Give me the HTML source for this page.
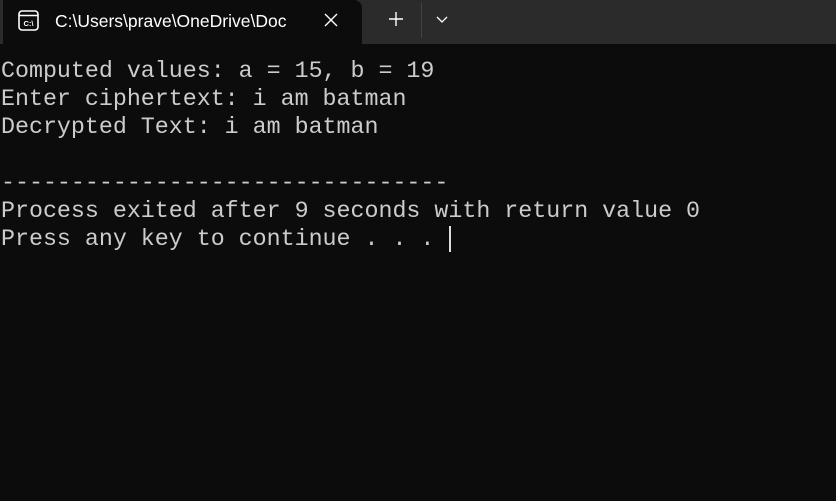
<!DOCTYPE html>
<html><head><style>
html,body{margin:0;padding:0;width:836px;height:501px;background:#0c0c0c;overflow:hidden}
.bar{position:absolute;left:0;top:0;width:836px;height:44px;background:#2b2b2b}
.tab{position:absolute;left:3px;top:0;width:359px;height:44px;background:#0c0c0c;border-radius:0 8px 0 0}
.title{position:absolute;left:55px;top:9px;width:246px;overflow:hidden;white-space:nowrap;color:#fff;font:17.5px "Liberation Sans",sans-serif;line-height:24px}
.term{position:absolute;left:1px;top:57px;color:#cccccc;font:23.3px/28px "Liberation Mono",monospace;white-space:pre}
.cur{position:absolute;left:449px;top:226px;width:2px;height:26px;background:#ddd}
</style></head><body>
<div class="bar"></div>
<div class="tab"></div>
<svg style="position:absolute;left:17px;top:9px" width="24" height="24" viewBox="0 0 24 24"><rect x="2" y="2" width="19" height="19" rx="3" fill="none" stroke="#fff" stroke-width="1.6"/><line x1="2" y1="6.5" x2="21" y2="6.5" stroke="#fff" stroke-width="1.4"/><text x="11.5" y="17" text-anchor="middle" fill="#fff" font-family="Liberation Sans" font-size="7.5" font-weight="bold">C:\</text></svg>
<div class="title">C:\Users\prave\OneDrive\Doc</div>
<svg style="position:absolute;left:323px;top:12px" width="16" height="16" viewBox="0 0 16 16"><path d="M2 2L14 14M14 2L2 14" stroke="#fff" stroke-width="1.4"/></svg>
<svg style="position:absolute;left:388px;top:11px" width="16" height="16" viewBox="0 0 16 16"><path d="M8 1V15M1 8H15" stroke="#fff" stroke-width="1.4"/></svg>
<div style="position:absolute;left:421px;top:3px;width:1px;height:35px;background:#444"></div>
<svg style="position:absolute;left:436px;top:15px" width="12" height="10" viewBox="0 0 12 10"><path d="M1 2L6 7L11 2" stroke="#fff" stroke-width="1.3" fill="none"/></svg>
<div class="term">Computed values: a = 15, b = 19
Enter ciphertext: i am batman
Decrypted Text: i am batman

--------------------------------
Process exited after 9 seconds with return value 0
Press any key to continue . . .</div>
<div class="cur"></div>
</body></html>
